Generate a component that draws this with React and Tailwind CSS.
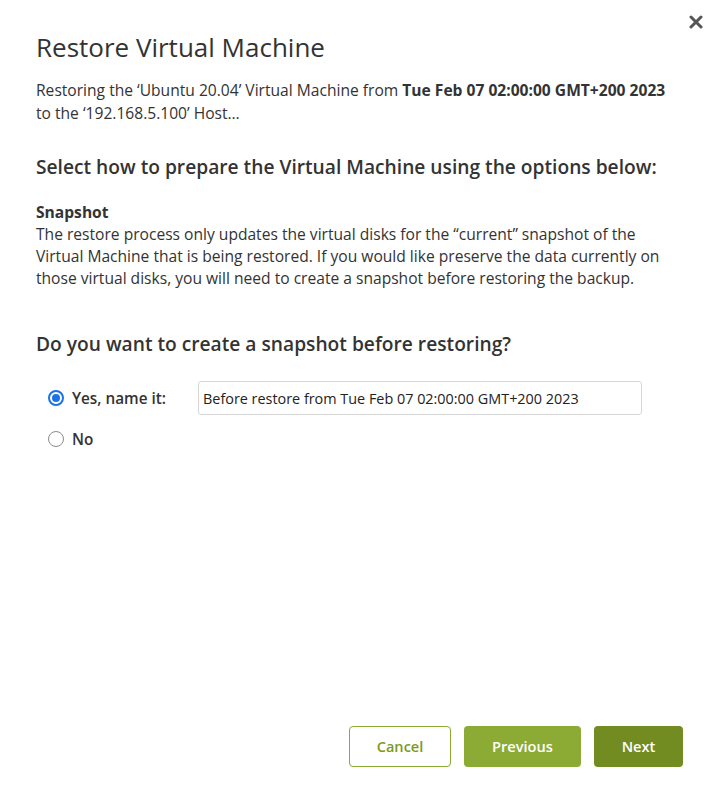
import React, { useState } from 'react';

const SNAPSHOT_DEFAULT = 'Before restore from Tue Feb 07 02:00:00 GMT+200 2023';

const Radio = ({ checked, onChange, label }) => (
    <label className="flex items-center gap-[8px] cursor-pointer">
        <span
            onClick={onChange}
            className={`w-[16px] h-[16px] rounded-full border flex items-center justify-center flex-shrink-0 ${checked ? 'border-[#1a73e8] border-2' : 'border-[#8a8a8a]'}`}
        >
            {checked && <span className="w-[8px] h-[8px] rounded-full bg-[#1a73e8]" />}
        </span>
        <span className="text-[15.3px] font-semibold text-[#333]">{label}</span>
    </label>
);

export default function App() {
    const [choice, setChoice] = useState('yes');
    const [name, setName] = useState(SNAPSHOT_DEFAULT);

    return (
        <div className="w-[720px] h-[797px] bg-white relative font-['Open_Sans',sans-serif] text-[#333] flex flex-col">
            {/* Close */}
            <button className="absolute top-[15px] right-[17px] text-[#555] p-0">
                <svg width="14" height="14" viewBox="0 0 14 14">
                    <path d="M2 2 L12 12 M12 2 L2 12" stroke="currentColor" strokeWidth="3" strokeLinecap="round" />
                </svg>
            </button>

            <div className="px-[36px] pt-[29px] flex-1">
                <h1 className="text-[26px] leading-[36px] text-[#333]">Restore Virtual Machine</h1>

                <p className="mt-[14px] text-[15.6px] leading-[23px]">
                    Restoring the ‘Ubuntu 20.04’ Virtual Machine from <b>Tue Feb 07 02:00:00 GMT+200 2023</b> to the ‘192.168.5.100’ Host…
                </p>

                <h2 className="mt-[28px] text-[19.2px] leading-[28px] font-semibold">
                    Select how to prepare the Virtual Machine using the options below:
                </h2>

                <div className="mt-[20px] text-[15.6px] leading-[22px]">
                    <p className="font-bold">Snapshot</p>
                    <p>
                        The restore process only updates the virtual disks for the “current” snapshot of the Virtual Machine that is being restored. If you would like preserve the data currently on those virtual disks, you will need to create a snapshot before restoring the backup.
                    </p>
                </div>

                <h2 className="mt-[41px] text-[19.2px] leading-[28px] font-semibold">
                    Do you want to create a snapshot before restoring?
                </h2>

                <div className="mt-[23px] pl-[12px] flex flex-col gap-[10px]">
                    <div className="flex items-center">
                        <div className="w-[150px]">
                            <Radio checked={choice === 'yes'} onChange={() => setChoice('yes')} label="Yes, name it:" />
                        </div>
                        <input
                            value={name}
                            onChange={(e) => setName(e.target.value)}
                            className="w-[444px] h-[34px] border border-[#d6d6d6] rounded-[3px] px-[4px] text-[14.4px] text-[#222] outline-none"
                        />
                    </div>
                    <div className="h-[28px] flex items-center">
                        <Radio checked={choice === 'no'} onChange={() => setChoice('no')} label="No" />
                    </div>
                </div>
            </div>

            {/* Footer actions */}
            <div className="flex justify-end gap-[13px] pr-[37px] pb-[30px]">
                <button className="w-[102px] h-[41px] rounded-[4px] border border-[#8aab33] bg-white text-[#7b9a22] text-[14.6px] font-semibold">
                    Cancel
                </button>
                <button className="w-[117px] h-[41px] rounded-[4px] bg-[#8bab34] text-white text-[14.6px] font-semibold">
                    Previous
                </button>
                <button className="w-[89px] h-[41px] rounded-[4px] bg-[#728c22] text-white text-[14.6px] font-semibold">
                    Next
                </button>
            </div>
        </div>
    );
}
